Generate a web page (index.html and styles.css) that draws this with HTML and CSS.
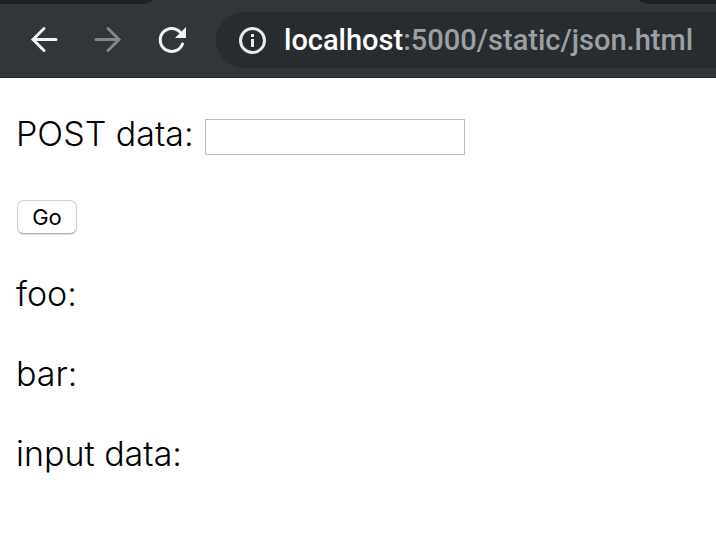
FILE: index.html
```
<!DOCTYPE html>
<html lang="en">
<head>
    <meta charset="UTF-8">
    <meta name="viewport" content="width=device-width, initial-scale=1.0">
    <title>json</title>
    <link rel="stylesheet" href="styles.css">
</head>
<body>
    <header class="browser">
        <div class="tabs">
            <div class="tab-left"></div>
            <div class="tab-active"></div>
            <div class="tab-right"></div>
        </div>
        <div class="toolbar">
            <button class="nav-btn" type="button" aria-label="Back">
                <svg width="32" height="32" viewBox="0 0 32 32"><path d="M28 15.500H5M16 4.500L5 15.500L16 26.500" fill="none" stroke="#f1f3f4" stroke-width="3" stroke-linecap="round"/></svg>
            </button>
            <button class="nav-btn" type="button" aria-label="Forward" disabled>
                <svg width="32" height="32" viewBox="0 0 32 32"><path d="M4 15.500H27M16 4.500L27 15.500L16 26.500" fill="none" stroke="#848688" stroke-width="3" stroke-linecap="round"/></svg>
            </button>
            <button class="nav-btn" type="button" aria-label="Reload">
                <svg width="32" height="32" viewBox="0 0 32 32"><path d="M26.500 20A11.500 11.500 0 1 1 24.500 8.500" fill="none" stroke="#f1f3f4" stroke-width="3" stroke-linecap="round"/><path d="M30 3V14H19Z" fill="#f1f3f4"/></svg>
            </button>
            <div class="address">
                <svg width="28" height="28" viewBox="0 0 28 28"><circle cx="14.500" cy="14.500" r="12" fill="none" stroke="#e8eaed" stroke-width="3"/><path d="M13 8h3v3h-3zM13 13h3v8h-3z" fill="#e8eaed"/></svg>
                <span class="url"><span class="host">localhost</span>:5000/static/json.html</span>
            </div>
        </div>
    </header>

    <main>
        <p><label for="data">POST data:</label> <input type="text" id="data"></p>
        <p><button class="go" id="go" type="button">Go</button></p>
        <p>foo: <span id="foo"></span></p>
        <p>bar: <span id="bar"></span></p>
        <p>input data: <span id="input-data"></span></p>
    </main>
</body>
</html>
```
FILE: styles.css
```
body{
    margin: 0;
    background: #fff;
    color: #000;
    font-family: Inter, "Liberation Sans", sans-serif;
    font-size: 34px;
    font-weight: 300;
    line-height: 48px;
}
.browser{
    background: #323639;
    border-bottom: 1px solid #232528;
    overflow: hidden;
}
.tabs{
    display: flex;
    height: 4px;
}
.tab-left{
    width: 152px;
    background: #202124;
    border-bottom-right-radius: 12px 4px;
}
.tab-active{
    flex: 1;
}
.tab-right{
    width: 76px;
    background: #202124;
    border-bottom-left-radius: 12px 4px;
}
.toolbar{
    display: flex;
    align-items: center;
    padding: 8px 0 9px 28px;
}
.nav-btn{
    display: flex;
    margin: 0 32px 0 0;
    padding: 0;
    border: 0;
    background: none;
}
.nav-btn svg{
    display: block;
}
.address{
    flex: 1;
    display: flex;
    align-items: center;
    gap: 18px;
    height: 56px;
    margin-left: -4px;
    padding-left: 22px;
    background: #282c2f;
    border-radius: 28px 0 0 28px;
}
.address svg{
    flex: none;
}
.url{
    color: #9aa0a6;
    font-family: Roboto, sans-serif;
    font-size: 29px;
    font-weight: 500;
    white-space: nowrap;
}
.host{
    color: #fff;
}
main{
    padding: 0 16px;
}
p{
    margin: 32px 0;
}
#data{
    box-sizing: border-box;
    width: 260px;
    height: 36px;
    margin: 0 2px;
    padding: 2px 4px;
    border: 1px solid #bebebe;
    font-family: inherit;
    font-size: 22px;
    vertical-align: middle;
}
.go{
    box-sizing: border-box;
    width: 60px;
    height: 34px;
    margin: 0 1px;
    padding: 0;
    border: 1px solid #cfcfcf;
    border-bottom-color: #b4b4b4;
    border-radius: 7px;
    background: #fff;
    box-shadow: 0 1px 1px #ddd;
    color: #000;
    font-family: Inter, sans-serif;
    font-size: 22px;
    vertical-align: middle;
}
```
